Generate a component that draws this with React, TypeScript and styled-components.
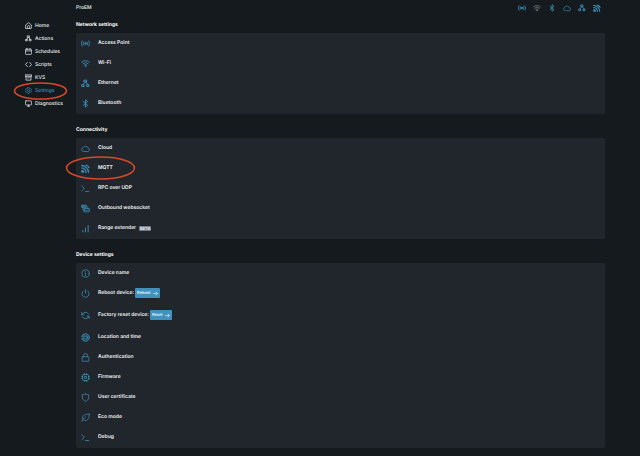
import React from "react";
import styled, { createGlobalStyle, css } from "styled-components";

const GlobalStyle = createGlobalStyle`
  * { box-sizing: border-box; }
  body {
    margin: 0;
    min-height: 100vh;
    background: #141a1e;
    color: #f0f2f4;
    font-family: Inter, "Liberation Sans", sans-serif;
    font-size: 5px;
    line-height: 8px;
    text-rendering: geometricPrecision;
  }
`;

const accent = "#3a8fb5";

const Page = styled.div`
  display: grid;
  grid-template-columns: 76px 1fr;
  padding-right: 35px;
`;

const Sidebar = styled.nav`
  padding: 19px 0 0 25px;
`;

const NavList = styled.ul`
  list-style: none;
  margin: 0;
  padding: 0;
`;

const NavLink = styled.a<{ $active?: boolean }>`
  position: relative;
  display: flex;
  align-items: center;
  gap: 3px;
  height: 13px;
  color: ${(p) => (p.$active ? accent : "#e8ebed")};
  font-weight: 500;
  text-decoration: none;
  white-space: nowrap;
  svg { width: 7px; height: 7px; flex: none; }
`;

const Main = styled.main`
  min-width: 0;
`;

const Header = styled.header`
  display: flex;
  align-items: center;
  justify-content: space-between;
  height: 15px;
  margin-bottom: 2px;
  padding-right: 4px;
`;

const DeviceTitle = styled.h1`
  margin: 0;
  font-size: 5px;
  font-weight: 500;
  line-height: 8px;
`;

const StatusIcons = styled.div`
  display: flex;
  gap: 7px;
`;

const Status = styled.span<{ $off?: boolean }>`
  display: flex;
  color: ${(p) => (p.$off ? "#77838b" : accent)};
  svg { width: 8px; height: 8px; }
`;

const Section = styled.section`
  margin-bottom: 8px;
`;

const SectionTitle = styled.h2`
  margin: 0;
  padding: 4px 0;
  font-size: 5px;
  font-weight: 700;
  line-height: 8px;
  color: #ffffff;
`;

const Panel = styled.ul`
  list-style: none;
  margin: 0;
  padding: 0 0 1px;
  background: #21262d;
  border-radius: 2px;
`;

const Row = styled.li<{ $spaced?: boolean }>`
  position: relative;
  display: flex;
  align-items: center;
  height: 20px;
  padding-left: 5px;
  ${(p) => p.$spaced && css`margin-bottom: 2px;`}
`;

const RowIcon = styled.span`
  display: flex;
  margin-right: 8px;
  color: ${accent};
  svg { width: 9px; height: 9px; }
`;

const RowLabel = styled.span`
  font-weight: 600;
  white-space: nowrap;
`;

const Badge = styled.span`
  margin-left: 3px;
  padding: 0 1px;
  border-radius: 1px;
  background: #747b8c;
  color: #f0f2f4;
  font-size: 4px;
  font-weight: 600;
  line-height: 5px;
`;

const ActionButton = styled.button`
  display: inline-flex;
  align-items: center;
  gap: 2px;
  height: 10px;
  margin-left: 1px;
  padding: 0 2px;
  border: 0;
  border-radius: 1px;
  background: #3f92bd;
  color: #f2f8fb;
  font: 500 4px/8px Inter, "Liberation Sans", sans-serif;
  text-rendering: geometricPrecision;
  svg { width: 5px; height: 5px; }
`;

const Ring = styled.svg<{ $wide?: boolean }>`
  && {
    position: absolute;
    top: 50%;
    left: ${(p) => (p.$wide ? "-11px" : "-12px")};
    width: ${(p) => (p.$wide ? "71px" : "55px")};
    height: ${(p) => (p.$wide ? "24px" : "18px")};
    transform: translateY(-50%);
    pointer-events: none;
  }
`;

const Highlight = ({ wide }: { wide?: boolean }) => (
  <Ring $wide={wide} aria-hidden="true">
    <ellipse
      cx="50%"
      cy="50%"
      rx={wide ? 34 : 26}
      ry={wide ? 11 : 8}
      fill="none"
      stroke="#d8492a"
      strokeWidth="1.6"
    />
  </Ring>
);

const Line = ({ children, weight = 2 }: { children: React.ReactNode; weight?: number }) => (
  <svg
    viewBox="0 0 24 24"
    fill="none"
    stroke="currentColor"
    strokeWidth={weight}
    strokeLinecap="round"
    strokeLinejoin="round"
    aria-hidden="true"
  >
    {children}
  </svg>
);

const HomeIcon = () => (
  <Line weight={2.4}>
    <path d="M2.500 10 12 2l9.500 8v12h-19z" />
    <path d="M8 22v-6a4 4 0 0 1 8 0v6" />
  </Line>
);

const NodesIcon = () => (
  <Line weight={2.6}>
    <rect x="9" y="3" width="6" height="5" />
    <rect x="3" y="15" width="5" height="5" />
    <rect x="16" y="15" width="5" height="5" />
    <path d="m11 8-5 7M13 8l5 7" />
  </Line>
);

const CalendarIcon = () => (
  <Line weight={2.4}>
    <rect x="2" y="4" width="20" height="18" rx="2" />
    <path d="M2 10h20M7 1v5M17 1v5" />
  </Line>
);

const CodeIcon = () => (
  <Line weight={2.6}>
    <path d="M8 5 1.500 12 8 19M16 5l6.500 7L16 19" />
  </Line>
);

const ArchiveIcon = () => (
  <Line weight={2.6}>
    <path d="M1.500 3h21v5h-21zM3.500 8v13h17V8M9 13h6" />
  </Line>
);

const GearIcon = () => (
  <Line weight={2}>
    <path d="M9.500 2h5l1 3 2 1.200 3.100-.7 2.400 4.300L21 12l2 2.200-2.400 4.300-3.100-.7-2 1.200-1 3h-5l-1-3-2-1.200-3.100.7L1 14.200 3 12 1 9.800l2.400-4.300 3.100.7 2-1.200z" />
    <circle cx="12" cy="12" r="4" />
  </Line>
);

const MonitorIcon = () => (
  <Line weight={2.4}>
    <rect x="1.500" y="3" width="21" height="14" rx="2" />
    <path d="M12 17v4M8 21.500h8" />
  </Line>
);

const AccessPointIcon = () => (
  <Line weight={2.4}>
    <circle cx="12" cy="12" r="2" fill="currentColor" />
    <path d="M7.500 8a7 7 0 0 0 0 8M16.500 8a7 7 0 0 1 0 8M3 5a12 12 0 0 0 0 14M21 5a12 12 0 0 1 0 14" />
  </Line>
);

const WifiIcon = () => (
  <Line weight={2.2}>
    <path d="M1.500 8.500a15 15 0 0 1 21 0M5 12.500a10 10 0 0 1 14 0M8.500 16a5 5 0 0 1 7 0" />
    <circle cx="12" cy="19" r="1" fill="currentColor" />
  </Line>
);

const BluetoothIcon = () => (
  <Line weight={2.4}>
    <path d="m6 7 12 10-6 5V2l6 5L6 17" />
  </Line>
);

const CloudIcon = () => (
  <Line>
    <path d="M6.500 20a5 5 0 0 1-.8-9.900A7 7 0 0 1 18.800 11a4.600 4.600 0 0 1 .2 9z" />
  </Line>
);

const MqttIcon = () => (
  <svg viewBox="0 0 24 24" fill="none" stroke="currentColor" strokeWidth="3.400" aria-hidden="true">
    <path d="M1 15a8 8 0 0 1 8 8H1z" fill="currentColor" stroke="none" />
    <path d="M1 10.500A12.500 12.500 0 0 1 13.500 23" />
    <path d="M1 4A19 19 0 0 1 20 23" />
    <path d="M13 2a21 21 0 0 1 9 9" />
  </svg>
);

const TerminalIcon = () => (
  <Line>
    <path d="m2 5 7 6.500L2 18M12 20h9" />
  </Line>
);

const WebsocketIcon = () => (
  <Line>
    <path d="M2 3h12v6H2z" fill="currentColor" fillOpacity="0.600" />
    <path d="M5 9v7h4M9 12h13v9H9zM18 7v5M9 16.500h13" />
  </Line>
);

const SignalIcon = () => (
  <Line weight={2.4}>
    <path d="M5 21v-4M12 21V11M19 21V4" />
  </Line>
);

const InfoIcon = () => (
  <Line>
    <circle cx="12" cy="12" r="10" />
    <path d="M12 11v6M12 7v.500" />
  </Line>
);

const PowerIcon = () => (
  <Line>
    <path d="M12 2v9M6.500 5a9.500 9.500 0 1 0 11 0" />
  </Line>
);

const RefreshIcon = () => (
  <Line>
    <path d="M2 4v6h6M22 20v-6h-6M3 10a9.500 9.500 0 0 1 17.500-1.500M21 14a9.500 9.500 0 0 1-17.500 1.500" />
  </Line>
);

const GlobeIcon = () => (
  <Line>
    <circle cx="12" cy="12" r="10" />
    <ellipse cx="12" cy="12" rx="4.500" ry="10" />
    <path d="M3 8.500h18M3 15.500h18" />
  </Line>
);

const LockIcon = () => (
  <Line>
    <rect x="3" y="10" width="18" height="12" rx="1" />
    <path d="M7 10V6.500a5 5 0 0 1 10 0V10" />
  </Line>
);

const ChipIcon = () => (
  <Line>
    <rect x="4" y="4" width="16" height="16" rx="4" />
    <rect x="9" y="9" width="6" height="6" rx="1" />
    <path d="M9 1v3M15 1v3M9 20v3M15 20v3M1 9h3M1 15h3M20 9h3M20 15h3" />
  </Line>
);

const ShieldIcon = () => (
  <Line>
    <path d="M12 2c3 2 5.500 2.500 8.500 2.500V12c0 5-4 8.500-8.500 10.500C7.500 20.500 3.500 17 3.500 12V4.500C6.500 4.500 9 4 12 2z" />
  </Line>
);

const LeafIcon = () => (
  <Line>
    <path d="M22 3C11 3 4 6 4 13c0 4 3 7 7 7 8 0 11-7 11-17z" />
    <path d="M2 22c2-5 5-8 10-11" />
  </Line>
);

const ArrowIcon = () => (
  <Line weight={3}>
    <path d="M3 12h18M14 5l7 7-7 7" />
  </Line>
);

type Glyph = () => React.JSX.Element;

const navItems: { label: string; icon: Glyph; active?: boolean }[] = [
  { label: "Home", icon: HomeIcon },
  { label: "Actions", icon: NodesIcon },
  { label: "Schedules", icon: CalendarIcon },
  { label: "Scripts", icon: CodeIcon },
  { label: "KVS", icon: ArchiveIcon },
  { label: "Settings", icon: GearIcon, active: true },
  { label: "Diagnostics", icon: MonitorIcon },
];

const statuses: { label: string; icon: Glyph; off?: boolean }[] = [
  { label: "Access point", icon: AccessPointIcon },
  { label: "Wi-Fi", icon: WifiIcon, off: true },
  { label: "Bluetooth", icon: BluetoothIcon },
  { label: "Cloud", icon: CloudIcon },
  { label: "Ethernet", icon: NodesIcon },
  { label: "MQTT", icon: MqttIcon },
];

interface Item {
  label: string;
  icon: Glyph;
  ringed?: boolean;
  badge?: string;
  action?: string;
}

const sections: { title: string; items: Item[] }[] = [
  {
    title: "Network settings",
    items: [
      { label: "Access Point", icon: AccessPointIcon },
      { label: "Wi-Fi", icon: WifiIcon },
      { label: "Ethernet", icon: NodesIcon },
      { label: "Bluetooth", icon: BluetoothIcon },
    ],
  },
  {
    title: "Connectivity",
    items: [
      { label: "Cloud", icon: CloudIcon },
      { label: "MQTT", icon: MqttIcon, ringed: true },
      { label: "RPC over UDP", icon: TerminalIcon },
      { label: "Outbound websocket", icon: WebsocketIcon },
      { label: "Range extender", icon: SignalIcon, badge: "BETA" },
    ],
  },
  {
    title: "Device settings",
    items: [
      { label: "Device name", icon: InfoIcon },
      { label: "Reboot device:", icon: PowerIcon, action: "Reboot" },
      { label: "Factory reset device:", icon: RefreshIcon, action: "Reset" },
      { label: "Location and time", icon: GlobeIcon },
      { label: "Authentication", icon: LockIcon },
      { label: "Firmware", icon: ChipIcon },
      { label: "User certificate", icon: ShieldIcon },
      { label: "Eco mode", icon: LeafIcon },
      { label: "Debug", icon: TerminalIcon },
    ],
  },
];

export default function App() {
  return (
    <>
      <GlobalStyle />
      <Page>
        <Sidebar aria-label="Main">
          <NavList>
            {navItems.map(({ label, icon: Icon, active }) => (
              <li key={label}>
                <NavLink href="#" $active={active} aria-current={active ? "page" : undefined}>
                  <Icon />
                  {label}
                  {active && <Highlight />}
                </NavLink>
              </li>
            ))}
          </NavList>
        </Sidebar>
        <Main>
          <Header>
            <DeviceTitle>ProEM</DeviceTitle>
            <StatusIcons>
              {statuses.map(({ label, icon: Icon, off }) => (
                <Status key={label} $off={off} role="img" aria-label={label}>
                  <Icon />
                </Status>
              ))}
            </StatusIcons>
          </Header>
          {sections.map(({ title, items }) => (
            <Section key={title}>
              <SectionTitle>{title}</SectionTitle>
              <Panel>
                {items.map(({ label, icon: Icon, ringed, badge, action }) => (
                  <Row key={label} $spaced={Boolean(action)}>
                    <RowIcon>
                      <Icon />
                    </RowIcon>
                    <RowLabel>{label}</RowLabel>
                    {badge && <Badge>{badge}</Badge>}
                    {action && (
                      <ActionButton type="button">
                        {action}
                        <ArrowIcon />
                      </ActionButton>
                    )}
                    {ringed && <Highlight wide />}
                  </Row>
                ))}
              </Panel>
            </Section>
          ))}
        </Main>
      </Page>
    </>
  );
}
